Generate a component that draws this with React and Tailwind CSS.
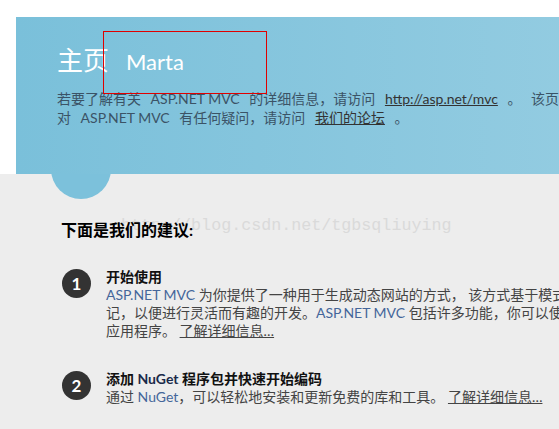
import React from "react";

const sans = "font-['Segoe_UI','Lato','Noto_Sans_CJK_SC',sans-serif]";

function Step({ n, title, children }) {
  return (
    <li className="flex gap-[15px]">
      <span className="mt-[1px] flex h-[29px] w-[29px] shrink-0 items-center justify-center rounded-full bg-[#333] text-[17px] font-bold text-white">
        {n}
      </span>
      <div className="text-[14px] leading-[18px]">
        <h5 className="font-bold text-[#111] whitespace-nowrap">{title}</h5>
        <div className="text-[#444]">{children}</div>
      </div>
    </li>
  );
}

export default function App() {
  return (
    <div className={`h-[429px] w-full overflow-hidden bg-white ${sans}`}>
      {/* Featured banner */}
      <header className="relative z-10 pl-4 pt-[17px]">
        <div className="relative h-[157px] w-[960px] bg-gradient-to-r from-[#7ac0da] to-[#a4d4e6] pl-[41px] pt-[27px]">
          <div className="flex items-baseline gap-[17px] text-white leading-[32px]">
            <h1 className="text-[26px] font-normal">主页</h1>
            <h2 className="text-[22px] font-normal">Marta</h2>
          </div>
          <p className="mt-[11px] text-[14px] leading-[19px] text-[#3b5366] whitespace-nowrap [word-spacing:6px]">
            若要了解有关 <span className="[word-spacing:0]">ASP.NET MVC</span> 的详细信息，请访问{" "}
            <a className="text-[#333] underline">http://asp.net/mvc</a> 。 该页提供视频、教程和示例以帮助你充分利用{" "}
            <span className="[word-spacing:0]">ASP.NET MVC</span>。如果你
            <br />
            对 <span className="[word-spacing:0]">ASP.NET MVC</span> 有任何疑问，请访问{" "}
            <a className="text-[#333] underline">我们的论坛</a> 。
          </p>
          {/* debug outline */}
          <div className="absolute left-[87px] top-[14px] h-[63px] w-[164px] border border-[#e00000]" />
        </div>
      </header>

      {/* Main content */}
      <main className="relative bg-[#ededed] pl-[61px] pt-[46px] h-[255px]">
        <div className="absolute left-[51px] top-[-35px] h-[60px] w-[60px] rounded-full bg-[#7cc1db]" />
        <div className="pointer-events-none absolute left-[121px] top-[42px] font-['Liberation_Mono',monospace] text-[16.7px] leading-[20px] text-[#dadada] whitespace-nowrap">
          http://blog.csdn.net/tgbsqliuying
        </div>
        <h3 className="relative text-[16px] font-bold leading-[20px] text-black">下面是我们的建议:</h3>
        <ol className="relative mt-[28px] flex flex-col gap-[30px] pl-px">
          <Step n="1" title="开始使用">
            <p className="whitespace-nowrap">
              <span className="text-[#44669a]">ASP.NET MVC</span> 为你提供了一种用于生成动态网站的方式， 该方式基于模式，可实现完全分离的关注点，并为你提供对标
              <br />
              记，以便进行灵活而有趣的开发。<span className="text-[#44669a]">ASP.NET MVC</span> 包括许多功能，你可以使用这些功能快速进行测试驱动的开发
              <br />
              应用程序。 <a className="underline">了解详细信息…</a>
            </p>
          </Step>
          <Step
            n="2"
            title={
              <>
                添加 <span className="text-[#1a2a4a]">NuGet</span> 程序包并快速开始编码
              </>
            }
          >
            <p className="whitespace-nowrap">
              通过 <span className="text-[#44669a]">NuGet</span>，可以轻松地安装和更新免费的库和工具。{" "}
              <a className="underline">了解详细信息…</a>
            </p>
          </Step>
        </ol>
      </main>
    </div>
  );
}
